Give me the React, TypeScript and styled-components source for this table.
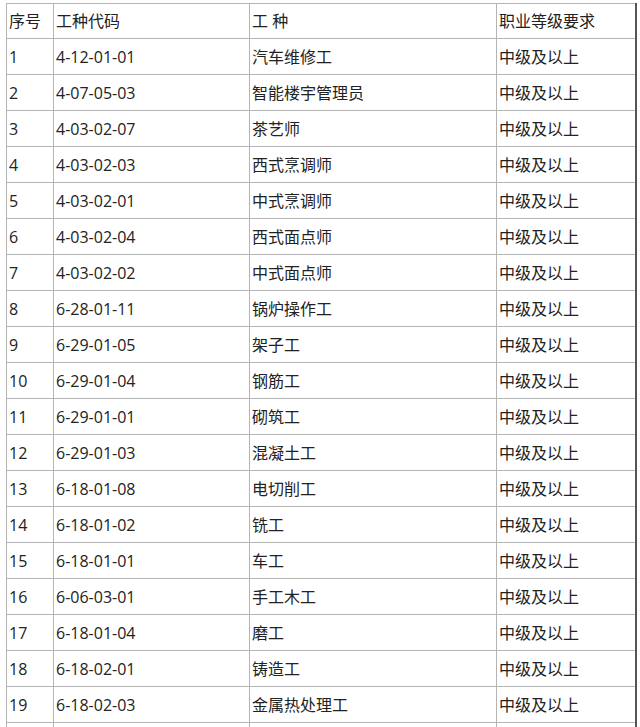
import styled, { createGlobalStyle } from "styled-components";

const GlobalStyle = createGlobalStyle`
  html, body {
    margin: 0;
    padding: 0;
    background: #fff;
  }
  body {
    font-family: "Open Sans", "Noto Sans CJK SC", sans-serif;
    color: #222;
  }
`;

const Page = styled.div`
  padding: 3px 0 0 6px;
  height: 727px;
  overflow: hidden;
  box-sizing: border-box;
`;

const Table = styled.table`
  border-collapse: collapse;
  table-layout: fixed;
  width: 629px;
  font-size: 16px;
`;

const Cell = styled.td<{ $last?: boolean }>`
  height: 35px;
  padding: 0 0 0 2px;
  border: 1px solid #b4b4b4;
  border-right: ${(p) => (p.$last ? "2px solid #555" : "1px solid #b4b4b4")};
  vertical-align: middle;
  white-space: nowrap;
  line-height: 1;
`;

const HeadCell = styled(Cell).attrs({ as: "th" })`
  font-weight: normal;
  text-align: left;
  height: 34px;
`;

const rows: [string, string, string][] = [
  ["1", "4-12-01-01", "汽车维修工"],
  ["2", "4-07-05-03", "智能楼宇管理员"],
  ["3", "4-03-02-07", "茶艺师"],
  ["4", "4-03-02-03", "西式烹调师"],
  ["5", "4-03-02-01", "中式烹调师"],
  ["6", "4-03-02-04", "西式面点师"],
  ["7", "4-03-02-02", "中式面点师"],
  ["8", "6-28-01-11", "锅炉操作工"],
  ["9", "6-29-01-05", "架子工"],
  ["10", "6-29-01-04", "钢筋工"],
  ["11", "6-29-01-01", "砌筑工"],
  ["12", "6-29-01-03", "混凝土工"],
  ["13", "6-18-01-08", "电切削工"],
  ["14", "6-18-01-02", "铣工"],
  ["15", "6-18-01-01", "车工"],
  ["16", "6-06-03-01", "手工木工"],
  ["17", "6-18-01-04", "磨工"],
  ["18", "6-18-02-01", "铸造工"],
  ["19", "6-18-02-03", "金属热处理工"],
];

export default function App() {
  return (
    <>
      <GlobalStyle />
      <Page>
        <Table>
          <colgroup>
            <col style={{ width: 47 }} />
            <col style={{ width: 196 }} />
            <col style={{ width: 247 }} />
            <col style={{ width: 139 }} />
          </colgroup>
          <thead>
            <tr>
              <HeadCell>序号</HeadCell>
              <HeadCell>工种代码</HeadCell>
              <HeadCell>工 种</HeadCell>
              <HeadCell $last>职业等级要求</HeadCell>
            </tr>
          </thead>
          <tbody>
            {rows.map(([no, code, name]) => (
              <tr key={no}>
                <Cell>{no}</Cell>
                <Cell>{code}</Cell>
                <Cell>{name}</Cell>
                <Cell $last>中级及以上</Cell>
              </tr>
            ))}
            <tr>
              <Cell>&nbsp;</Cell>
              <Cell>&nbsp;</Cell>
              <Cell>&nbsp;</Cell>
              <Cell $last>&nbsp;</Cell>
            </tr>
          </tbody>
        </Table>
      </Page>
    </>
  );
}
